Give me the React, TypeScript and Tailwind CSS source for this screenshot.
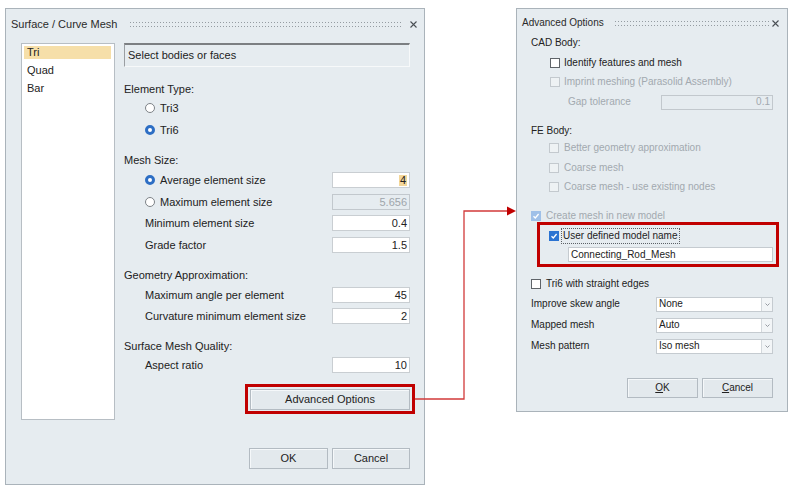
import React from 'react';

const FONT = "font-['Liberation_Sans',Arial,sans-serif]";

function Dots() {
  return (
    <div className="flex-1 flex flex-col gap-[3px]">
      <div className="h-px bg-[linear-gradient(to_right,#959ca2_1px,transparent_1px)] bg-[length:3px_1px]" />
      <div className="h-px bg-[linear-gradient(to_right,#959ca2_1px,transparent_1px)] bg-[length:3px_1px]" />
    </div>
  );
}

function CloseIcon() {
  return (
    <svg width="7" height="7" viewBox="0 0 7 7" className="shrink-0">
      <path d="M0.5 0.5 L6.5 6.5 M6.5 0.5 L0.5 6.5" stroke="#4a4f54" strokeWidth="1.1" />
    </svg>
  );
}

function Radio({ checked }: { checked?: boolean }) {
  return checked ? (
    <span className="w-[10px] h-[10px] rounded-full border-[3px] border-[#2d6ec4] bg-white shrink-0" />
  ) : (
    <span className="w-[10px] h-[10px] rounded-full border border-[#7d8287] bg-white shrink-0" />
  );
}

function Checkbox({ checked, disabled }: { checked?: boolean; disabled?: boolean }) {
  if (checked) {
    return (
      <span
        className={`w-[10px] h-[10px] shrink-0 flex items-center justify-center ${
          disabled ? 'bg-[#9fc0e8]' : 'bg-[#2b73d2]'
        }`}
      >
        <svg width="8" height="8" viewBox="0 0 8 8">
          <path d="M1.5 4.2 L3.3 6 L6.6 2" stroke="white" strokeWidth="1.3" fill="none" />
        </svg>
      </span>
    );
  }
  return (
    <span
      className={`w-[10px] h-[10px] shrink-0 border ${
        disabled ? 'border-[#c3c9ce] bg-[#eef2f4]' : 'border-[#5f6469] bg-white'
      }`}
    />
  );
}

function Field({ value, disabled, highlight }: { value: string; disabled?: boolean; highlight?: boolean }) {
  return (
    <div
      className={`ml-auto w-[78px] h-[16px] border flex items-center justify-end pr-[2px] ${
        disabled ? 'bg-[#e6ecf0] border-[#c2c8cd] text-[#9ea5ab]' : 'bg-white border-[#c9ced2]'
      }`}
    >
      {highlight ? <span className="bg-[#f3d79a] px-px">{value}</span> : value}
    </div>
  );
}

function Btn({ children, className = '' }: { children: React.ReactNode; className?: string }) {
  return (
    <div
      className={`flex items-center justify-center border border-[#b3bbc2] bg-[#e3e9ed] shadow-[inset_1px_1px_0_#f5f8fa] ${className}`}
    >
      {children}
    </div>
  );
}

function Select({ value }: { value: string }) {
  return (
    <div className="ml-auto w-[117px] h-[15px] flex border border-[#c5cbd0] bg-white">
      <div className="flex-1 flex items-center pl-[2px]">{value}</div>
      <div className="w-[11px] border-l border-[#d3d8dc] bg-[#f2f5f7] flex items-center justify-center">
        <svg width="5" height="3" viewBox="0 0 5 3">
          <path d="M0.5 0.5 L2.5 2.5 L4.5 0.5" stroke="#8a9096" strokeWidth="0.9" fill="none" />
        </svg>
      </div>
    </div>
  );
}

function SurfaceMeshDialog() {
  const row = 'h-[20px] flex items-center';
  return (
    <div className="w-[420px] h-[477px] shrink-0 border border-[#aab3ba] bg-[#e6ecf0] flex flex-col text-[11px] leading-none">
      {/* title bar */}
      <div className="h-[30px] flex items-center pl-[5px] pr-[7px]">
        <span className="text-[#2a2a2a]">Surface / Curve Mesh</span>
        <div className="ml-[13px] flex-1 flex">
          <Dots />
        </div>
        <div className="ml-[8px]">
          <CloseIcon />
        </div>
      </div>

      <div className="mt-[4px] flex pl-[15px] pr-[14px] gap-[9px]">
        {/* type list */}
        <div className="w-[94px] h-[377px] border border-[#b7bec4] bg-white pt-[2px] pl-[2px] pr-[3px]">
          <div className="h-[13px] bg-[#f6dfa9] flex items-center pl-[3px]">Tri</div>
          <div className="mt-[5px] h-[13px] flex items-center pl-[3px]">Quad</div>
          <div className="mt-[5px] h-[13px] flex items-center pl-[3px]">Bar</div>
        </div>

        {/* settings */}
        <div className="w-[286px] flex flex-col">
          <div className="h-[24px] border-t-2 border-l border-t-[#7c7f82] border-l-[#9a9ea2] border-r border-b border-r-[#f7f9fa] border-b-[#f7f9fa] flex items-center pl-[3px]">
            Select bodies or faces
          </div>

          <div className={`${row} mt-[12px]`}>Element Type:</div>
          <div className={`${row} -mt-px pl-[21px] gap-[5px]`}>
            <Radio />
            <span>Tri3</span>
          </div>
          <div className={`${row} mt-[2px] pl-[21px] gap-[5px]`}>
            <Radio checked />
            <span>Tri6</span>
          </div>

          <div className={`${row} mt-[10px]`}>Mesh Size:</div>
          <div className={`${row} pl-[21px]`}>
            <Radio checked />
            <span className="ml-[5px]">Average element size</span>
            <Field value="4" highlight />
          </div>
          <div className={`${row} mt-[2px] pl-[21px]`}>
            <Radio />
            <span className="ml-[5px]">Maximum element size</span>
            <Field value="5.656" disabled />
          </div>
          <div className={`${row} mt-[1px] pl-[21px]`}>
            <span>Minimum element size</span>
            <Field value="0.4" />
          </div>
          <div className={`${row} mt-[2px] pl-[21px]`}>
            <span>Grade factor</span>
            <Field value="1.5" />
          </div>

          <div className={`${row} mt-[10px]`}>Geometry Approximation:</div>
          <div className={`${row} pl-[21px]`}>
            <span>Maximum angle per element</span>
            <Field value="45" />
          </div>
          <div className={`${row} mt-[1px] pl-[21px]`}>
            <span>Curvature minimum element size</span>
            <Field value="2" />
          </div>

          <div className={`${row} mt-[10px]`}>Surface Mesh Quality:</div>
          <div className={`${row} -mt-px pl-[21px]`}>
            <span>Aspect ratio</span>
            <Field value="10" />
          </div>

          <div className="mt-[9px] self-end -mr-[5px] w-[170px] h-[30px] border-[3px] border-[#c00000] flex items-center justify-center">
            <Btn className="w-[160px] h-[21px]">Advanced Options</Btn>
          </div>
        </div>
      </div>

      <div className="mt-[28px] flex justify-end gap-[4px] pr-[14px]">
        <Btn className="w-[79px] h-[21px]">OK</Btn>
        <Btn className="w-[78px] h-[21px]">Cancel</Btn>
      </div>
    </div>
  );
}

function AdvancedOptionsDialog() {
  const row = 'h-[16px] flex items-center';
  const off = 'text-[#a2a9af]';
  return (
    <div className="w-[272px] h-[404px] shrink-0 border border-[#aab3ba] bg-[#e6ecf0] flex flex-col text-[10px] leading-none">
      <div className="h-[28px] flex items-center pl-[5px] pr-[8px]">
        <span className="text-[#2a2a2a]">Advanced Options</span>
        <div className="ml-[11px] flex-1 flex">
          <Dots />
        </div>
        <div className="ml-[3px]">
          <CloseIcon />
        </div>
      </div>

      <div className="-mt-[2px] flex flex-col px-[14px]">
        <div className={row}>CAD Body:</div>
        <div className={`${row} mt-[4px] pl-[19px] gap-[4px]`}>
          <Checkbox />
          <span>Identify features and mesh</span>
        </div>
        <div className={`${row} mt-[3px] pl-[19px] gap-[4px] ${off}`}>
          <Checkbox disabled />
          <span>Imprint meshing (Parasolid Assembly)</span>
        </div>
        <div className={`${row} mt-[4px] pl-[37px] ${off}`}>
          <span>Gap tolerance</span>
          <div className="ml-auto w-[112px] h-[15px] border border-[#c2c8cd] flex items-center justify-end pr-[2px]">
            0.1
          </div>
        </div>

        <div className={`${row} mt-[13px]`}>FE Body:</div>
        <div className={`${row} mt-[1px] pl-[18px] gap-[5px] ${off}`}>
          <Checkbox disabled />
          <span>Better geometry approximation</span>
        </div>
        <div className={`${row} mt-[4px] pl-[18px] gap-[5px] ${off}`}>
          <Checkbox disabled />
          <span>Coarse mesh</span>
        </div>
        <div className={`${row} mt-[3px] pl-[18px] gap-[5px] ${off}`}>
          <Checkbox disabled />
          <span>Coarse mesh - use existing nodes</span>
        </div>

        <div className={`${row} mt-[13px] gap-[5px] ${off}`}>
          <Checkbox checked disabled />
          <span>Create mesh in new model</span>
        </div>

        <div className="-mt-[2px] ml-[6px] -mr-[6px] border-[3px] border-[#c00000] pt-[3px] pb-[2px] pl-[9px] pr-[3px] flex flex-col">
          <div className={row}>
            <Checkbox checked />
            <span className="ml-[2px] h-[16px] border border-dotted border-[#5c6166] flex items-center px-[1px]">
              User defined model name
            </span>
          </div>
          <div className="mt-[3px] ml-[19px] h-[15px] border border-[#c5cbd0] bg-white flex items-center pl-[2px]">
            Connecting_Rod_Mesh
          </div>
        </div>

        <div className={`${row} mt-[9px] gap-[5px]`}>
          <Checkbox />
          <span>Tri6 with straight edges</span>
        </div>
        <div className={`${row} mt-[4px]`}>
          <span>Improve skew angle</span>
          <Select value="None" />
        </div>
        <div className={`${row} mt-[5px]`}>
          <span>Mapped mesh</span>
          <Select value="Auto" />
        </div>
        <div className={`${row} mt-[5px]`}>
          <span>Mesh pattern</span>
          <Select value="Iso mesh" />
        </div>

        <div className="mt-[24px] flex justify-end gap-[4px]">
          <Btn className="w-[71px] h-[20px]">
            <span className="underline underline-offset-1">O</span>K
          </Btn>
          <Btn className="w-[71px] h-[20px]">
            <span className="underline underline-offset-1">C</span>ancel
          </Btn>
        </div>
      </div>
    </div>
  );
}

export default function App() {
  return (
    <div className={`relative w-[804px] h-[492px] bg-white overflow-hidden text-[#222] ${FONT}`}>
      <div className="flex items-start pl-[5px] pt-[8px] gap-[91px]">
        <SurfaceMeshDialog />
        <AdvancedOptionsDialog />
      </div>

      {/* callout connector */}
      <svg className="absolute inset-0 pointer-events-none" width="804" height="492" viewBox="0 0 804 492">
        <path d="M415 399 H464 V211 H508" stroke="#d23a3a" strokeWidth="1.3" fill="none" />
        <path d="M507 206.5 L516 211 L507 215.5 Z" fill="#c00000" />
      </svg>
    </div>
  );
}
